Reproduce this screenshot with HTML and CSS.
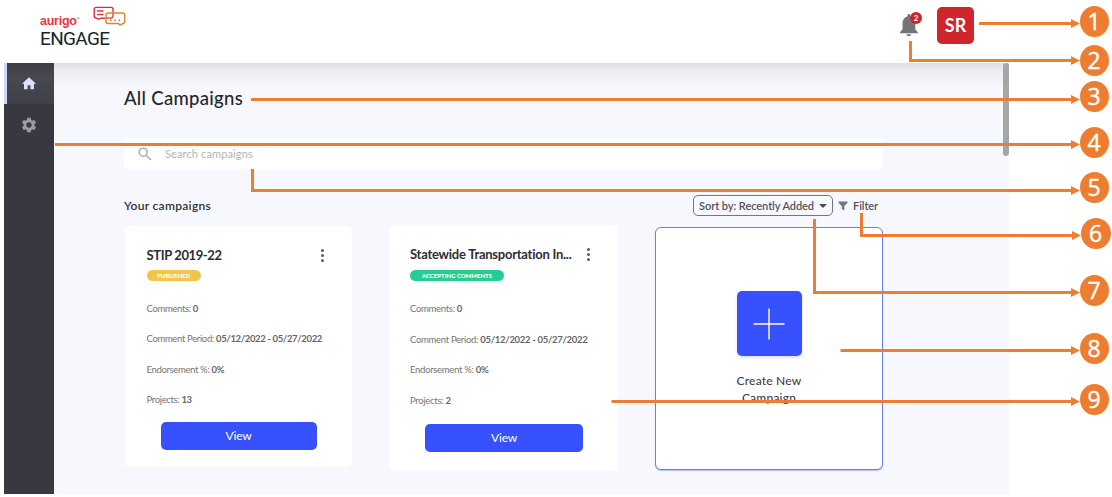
FILE: index.html
```html
<!DOCTYPE html>
<html lang="en">
<head>
<meta charset="utf-8">
<title>All Campaigns</title>
<link rel="stylesheet" href="styles.css">
</head>
<body>
<div class="app">
  <header class="topbar">
    <div class="brand">
      <div class="brand-top">
        <span class="brand-name">aurigo<span class="reg">®</span></span>
        <svg class="brand-icon" width="34" height="21" viewBox="0 0 34 21" fill="none" stroke-width="1.4">
          <path d="M12 12.200H8L5.500 13.300 3.500 12.200Q1.200 12 1.200 9.800V3.400Q1.200 1.400 3.200 1.400H18Q20 1.400 20 3.400V6" stroke="#d92f35"/>
          <path d="M4 5H10.500M4 8.500H10.500" stroke="#e2353a"/>
          <path d="M15 7H29.500Q31.700 7 31.700 9V15.500Q31.700 17.500 29.700 17.700L27 19.200 25.500 17.500H15Q13 17.500 13 15.500V9Q13 7 15 7Z" stroke="#d98432"/>
          <path d="M20 7V10Q20 12 18 12H13" stroke="#d8552f"/>
          <path d="M17 14.200H18.500M21.300 14.200H22.800M25.600 14.200H27.100" stroke="#df5a35"/>
        </svg>
      </div>
      <div class="brand-product">ENGAGE</div>
    </div>
    <div class="account">
      <div class="bell">
        <svg width="20" height="24" viewBox="0 0 20 24" fill="#757575"><path d="M1 20.300V19L3.500 16.500V10.500C3.500 6.700 5.500 4 8.600 3.200V2.300C8.600 0.600 11.200 0.600 11.200 2.300V3.200C14.300 4 16.300 6.700 16.300 10.500V16.500L18.700 19V20.300ZM7.500 21.200H12.100C12.100 23.700 7.500 23.700 7.500 21.200Z"/></svg>
        <span class="badge">2</span>
      </div>
      <div class="avatar">SR</div>
    </div>
  </header>
  <div class="body">
    <nav class="sidebar">
      <div class="nav-item active"><svg width="14" height="13" viewBox="0 0 14 13" fill="#dbe2ff"><path d="M7 .3L14 6.700H12V12.300H8.400V8.300H5.600V12.300H2V6.700H0Z"/></svg></div>
      <div class="nav-item"><svg width="18" height="18" viewBox="0 0 24 24" fill="#9c9ca8"><path d="M19.140 12.940c.04-.3.060-.61.060-.94 0-.32-.020-.64-.070-.94l2.030-1.580c.18-.14.230-.41.120-.61l-1.920-3.320c-.12-.22-.37-.29-.59-.22l-2.390.96c-.5-.38-1.030-.7-1.620-.94l-.36-2.540c-.04-.24-.24-.41-.48-.41h-3.840c-.24 0-.43.170-.47.410l-.36 2.540c-.59.240-1.130.570-1.620.940l-2.390-.96c-.22-.08-.47 0-.59.220L2.740 8.870c-.12.210-.08.470.12.610l2.030 1.580c-.05.300-.09.630-.09.940s.020.640.070.940l-2.030 1.580c-.18.140-.23.410-.12.610l1.920 3.320c.12.220.370.290.590.220l2.390-.96c.5.380 1.030.700 1.620.940l.36 2.540c.05.240.240.410.480.410h3.840c.24 0 .44-.17.470-.41l.36-2.540c.59-.24 1.130-.56 1.620-.94l2.390.96c.22.080.470 0 .590-.22l1.920-3.320c.12-.22.070-.47-.12-.61l-2.010-1.580zM12 15.600c-1.980 0-3.600-1.620-3.600-3.600s1.620-3.600 3.600-3.600 3.600 1.620 3.600 3.600-1.620 3.600-3.600 3.600z"/></svg></div>
    </nav>
    <main class="content">
      <h1 class="title">All Campaigns</h1>
      <div class="search">
        <svg width="14" height="14" viewBox="0 0 14 14" fill="none" stroke="#acacba" stroke-width="1.600"><circle cx="5.200" cy="5.200" r="4"/><path d="M8.200 8.200L13 13"/></svg>
        <span class="placeholder">Search campaigns</span>
      </div>
      <div class="toolbar">
        <h2 class="subtitle">Your campaigns</h2>
        <div class="sort"><span class="sort-text">Sort by: Recently Added</span><i class="caret"></i></div>
        <svg class="funnel" width="10" height="10" viewBox="0 0 10 10" fill="#75757f"><path d="M.5.500H9.500V1.700L6.300 5.200V9.500L3.800 8V5.200L.5 1.700Z"/></svg>
        <span class="filter-text">Filter</span>
      </div>
      <div class="cards">
        <article class="card card-a">
          <div class="card-head"><h3 class="name-a">STIP 2019-22</h3><span class="dots"><i></i><i></i><i></i></span></div>
          <div class="tag tag-a"><span>PUBLISHED</span></div>
          <ul class="facts">
            <li>Comments: <b>0</b></li>
            <li class="period">Comment Period: <b>05/12/2022 - 05/27/2022</b></li>
            <li>Endorsement %: <b>0%</b></li>
            <li>Projects: <b>13</b></li>
          </ul>
          <div class="view">View</div>
        </article>
        <article class="card card-b">
          <div class="card-head"><h3 class="name-b">Statewide Transportation In...</h3><span class="dots"><i></i><i></i><i></i></span></div>
          <div class="tag tag-b"><span>ACCEPTING COMMENTS</span></div>
          <ul class="facts">
            <li>Comments: <b>0</b></li>
            <li class="period">Comment Period: <b>05/12/2022 - 05/27/2022</b></li>
            <li>Endorsement %: <b>0%</b></li>
            <li>Projects: <b>2</b></li>
          </ul>
          <div class="view">View</div>
        </article>
        <article class="card-new">
          <div class="plus"><svg width="32" height="32" viewBox="0 0 32 32" stroke="#fff" stroke-width="1.400"><path d="M16 .5V31.500M.5 16H31.500"/></svg></div>
          <div class="new-text">Create New<br>Campaign</div>
        </article>
      </div>
    </main>
    <div class="scroll-thumb"></div>
  </div>
</div>
<!-- numbered callouts -->
<svg class="callouts" width="1112" height="497" viewBox="0 0 1112 497">
  <g class="leads">
    <path d="M979 23.500H1073"/><path d="M910.500 41V60.500H1073"/><path d="M251 99.500H1073"/>
    <path d="M55 144.500H1073"/><path d="M252.500 169V190.500H1073"/><path d="M861.500 213V235.500H1074"/>
    <path d="M814.500 219V292.500H1073"/><path d="M840.500 350.500H1073"/><path d="M611.500 401.500H1073"/>
  </g>
  <path class="disc" d="M1071 19l9 4.500-9 4.500zM1071 56l9 4.500-9 4.500zM1071 95l9 4.500-9 4.500zM1071 140l9 4.500-9 4.500zM1071 186l9 4.500-9 4.500zM1072 231l9 4.500-9 4.500zM1071 288l9 4.500-9 4.500zM1071 346l9 4.500-9 4.500zM1071 397l9 4.500-9 4.500z"/>
  <g class="disc">
    <ellipse cx="1094.500" cy="21.500" rx="14.500" ry="15.500"/><ellipse cx="1094.500" cy="60.500" rx="14.500" ry="15.500"/>
    <ellipse cx="1094.500" cy="96.500" rx="14.500" ry="15.500"/><ellipse cx="1094.500" cy="142.500" rx="14.500" ry="15.500"/>
    <ellipse cx="1094.500" cy="187.500" rx="14.500" ry="15.500"/><ellipse cx="1096" cy="233.500" rx="15" ry="15.500"/>
    <ellipse cx="1094.500" cy="290.500" rx="14.500" ry="15.500"/><ellipse cx="1094.500" cy="348.500" rx="14.500" ry="15.500"/>
    <ellipse cx="1094.500" cy="399.500" rx="14.500" ry="15.500"/>
  </g>
  <g class="nums">
    <text x="1094" y="30">1</text><text x="1094" y="69">2</text><text x="1094" y="105">3</text>
    <text x="1094" y="151">4</text><text x="1094" y="196">5</text><text x="1095.500" y="242">6</text>
    <text x="1094" y="299">7</text><text x="1094" y="357">8</text><text x="1094" y="408">9</text>
  </g>
</svg>
</body>
</html>
```
FILE: styles.css
```css
* { box-sizing: border-box; }
body { margin: 0; background: #fff; font-family: Lato, "Open Sans", sans-serif; position: relative; height: 497px; overflow: hidden; }
h1, h2, h3, ul { margin: 0; padding: 0; }
.app { width: 1005px; height: 494px; margin-left: 4px; display: flex; flex-direction: column; }
.topbar { height: 63px; flex: none; display: flex; justify-content: space-between; background: #fff; }
.brand { padding: 6px 0 0 36px; }
.brand-top { display: flex; height: 22px; }
.brand-name { width: 53px; font: 700 12.500px/26px "Liberation Sans", sans-serif; letter-spacing: -.25px; color: #ee3338; }
.reg { font-size: 4px; vertical-align: 5px; }
.brand-product { font: 400 19px/21px Roboto, sans-serif; color: #15262a; letter-spacing: -.65px; }
.account { display: flex; padding-right: 35px; }
.bell { position: relative; width: 38px; padding-top: 13px; }
.badge { position: absolute; left: 11px; top: 12px; width: 12px; height: 12px; border-radius: 50%; background: #d0242b; color: #fff; font: 700 8px/12px Lato, sans-serif; text-align: center; }
.avatar { width: 37px; height: 37px; margin-top: 7px; border-radius: 5px; background: #d0252c; color: #fff; font-size: 18px; font-weight: 700; line-height: 37px; text-align: center; }
.body { flex: 1; display: flex; background: linear-gradient(#dedfe3, #ebecf1 7px, #f7f8fd 24px); }
.sidebar { width: 50px; background: #393841; }
.nav-item { height: 41px; display: flex; align-items: center; justify-content: center; }
.nav-item.active { border-left: 3px solid #cfd6fb; padding-right: 3px; background: linear-gradient(#3d3d43, #484850 14px, #414149); }
.content { width: 829px; padding-left: 70px; }
.title { height: 75px; padding-top: 23px; font-size: 18.500px; line-height: 24px; font-weight: 500; color: #25262f; letter-spacing: .3px; }
.search { width: 759px; height: 31px; background: #fff; border-radius: 4px; display: flex; align-items: center; gap: 13px; padding-left: 14px; }
.placeholder { font-size: 11px; letter-spacing: .12px; color: #b4b4b7; }
.toolbar { height: 57px; display: flex; padding-top: 26px; }
.subtitle { width: 569px; font-size: 12px; letter-spacing: .3px; line-height: 22px; font-weight: 600; color: #30313a; }
.sort { width: 140px; height: 21px; border: 1px solid #707297; border-radius: 5px; display: flex; align-items: center; padding-left: 5px; }
.sort-text, .filter-text { font-size: 11px; letter-spacing: -.06px; color: #50515f; font-weight: 600; line-height: 19px; white-space: nowrap; }
.filter-text { line-height: 21px; }
.sort-text { width: 120px; }
.caret { border: 4px solid transparent; border-top-color: #46475c; border-bottom: 0; }
.funnel { margin: 6px 5px 0 5px; }
.cards { display: flex; align-items: flex-start; padding-left: 1px; }
.card { background: #fff; border-radius: 5px; color: #757575; }
.card-a { width: 227px; height: 241px; padding: 18px 0 0 21.500px; }
.card-b { width: 229px; height: 246px; margin: -1px 0 0 37px; padding: 18px 0 0 21px; }
.card-head { display: flex; height: 26px; }
.card-head h3 { font-size: 13px; line-height: 22px; font-weight: 700; color: #2c2d36; white-space: nowrap; width: 174px; letter-spacing: -.38px; }
.card-head .name-b { width: 177px; letter-spacing: -.25px; }
.dots { display: flex; flex-direction: column; gap: 2px; padding-top: 5px; }
.dots i { width: 3px; height: 3px; border-radius: 50%; background: #5c5c5c; }
.tag { height: 11px; border-radius: 6px; color: #fff; font-size: 6px; font-weight: 900; line-height: 11px; text-align: center; }
.tag-a { width: 54px; background: #f0c64a; }
.tag-b { width: 94px; margin-top: 1px; background: #25cd92; }
.facts { list-style: none; padding-top: 18px; font-size: 9.500px; letter-spacing: -.35px; white-space: nowrap; }
.facts li { height: 30.300px; line-height: 19px; }
.card-b .facts li { height: 30.700px; letter-spacing: -.3px; }
.facts b { font-weight: 700; color: #666; }
.view { width: 156px; height: 28px; margin: 2px 0 0 14px; border-radius: 5px; background: #3751ff; color: #fff; font-size: 12px; letter-spacing: -.2px; line-height: 28px; text-align: center; }
.card-b .view { width: 158px; margin-left: 15px; }
.card-new { width: 228px; height: 243px; margin: 1px 0 0 37px; border: 1px solid #6a7cf6; border-radius: 6px; background: #fff; display: flex; flex-direction: column; align-items: center; padding-top: 63px; box-shadow: 0 1px 1px #b7bee8; }
.plus { width: 65px; height: 65px; flex: none; border-radius: 5px; background: #3751ff; display: flex; align-items: center; justify-content: center; box-shadow: 0 2px 3px #dce0ff; }
.new-text { margin-top: 16px; font-size: 12px; letter-spacing: .2px; line-height: 17px; color: #3f404a; font-weight: 500; text-align: center; }
.scroll-thumb { width: 6px; height: 93px; margin-left: 120px; background: #a6a6a7; border-radius: 3px; }
.callouts { position: absolute; left: 0; top: 0; }
.leads { fill: none; stroke: #ed7d31; stroke-width: 3; }
.disc { fill: #ed7d31; }
.nums { fill: #fff; stroke: #fff; stroke-width: .4; font: 400 23px "Open Sans", sans-serif; text-anchor: middle; }
```
